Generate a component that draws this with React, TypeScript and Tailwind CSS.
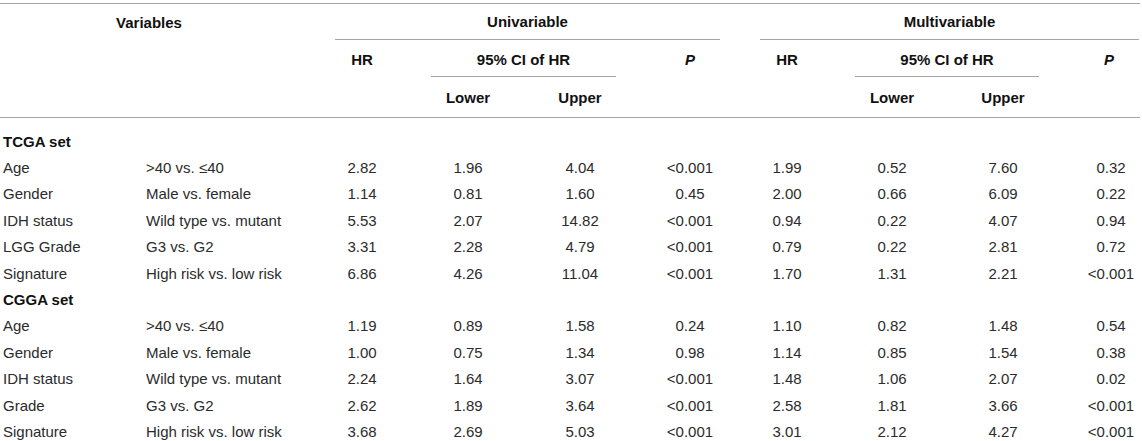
import React from "react";

type Row = [string, string, string, string, string, string, string, string, string, string];

const tcga: Row[] = [
  ["Age", ">40 vs. ≤40", "2.82", "1.96", "4.04", "<0.001", "1.99", "0.52", "7.60", "0.32"],
  ["Gender", "Male vs. female", "1.14", "0.81", "1.60", "0.45", "2.00", "0.66", "6.09", "0.22"],
  ["IDH status", "Wild type vs. mutant", "5.53", "2.07", "14.82", "<0.001", "0.94", "0.22", "4.07", "0.94"],
  ["LGG Grade", "G3 vs. G2", "3.31", "2.28", "4.79", "<0.001", "0.79", "0.22", "2.81", "0.72"],
  ["Signature", "High risk vs. low risk", "6.86", "4.26", "11.04", "<0.001", "1.70", "1.31", "2.21", "<0.001"],
];

const cgga: Row[] = [
  ["Age", ">40 vs. ≤40", "1.19", "0.89", "1.58", "0.24", "1.10", "0.82", "1.48", "0.54"],
  ["Gender", "Male vs. female", "1.00", "0.75", "1.34", "0.98", "1.14", "0.85", "1.54", "0.38"],
  ["IDH status", "Wild type vs. mutant", "2.24", "1.64", "3.07", "<0.001", "1.48", "1.06", "2.07", "0.02"],
  ["Grade", "G3 vs. G2", "2.62", "1.89", "3.64", "<0.001", "2.58", "1.81", "3.66", "<0.001"],
  ["Signature", "High risk vs. low risk", "3.68", "2.69", "5.03", "<0.001", "3.01", "2.12", "4.27", "<0.001"],
];

// column widths tuned so every centred value lands on its header
const cols = "grid grid-cols-[143px_140px_158px_54px_170px_50px_144px_66px_156px_60px]";

function SetTitle({ label }: { label: string }) {
  return (
    <div className="h-[26.4px] flex items-center pl-[3px] font-bold text-[#111]">{label}</div>
  );
}

function DataRow({ row }: { row: Row }) {
  return (
    <div className={`${cols} h-[26.4px] items-center`}>
      <div className="pl-[3px] whitespace-nowrap">{row[0]}</div>
      <div className="pl-[3px] whitespace-nowrap">{row[1]}</div>
      {row.slice(2).map((v, i) => (
        <div key={i} className="text-center whitespace-nowrap">
          {v}
        </div>
      ))}
    </div>
  );
}

export default function App() {
  return (
    <div
      className="bg-white w-[1142px] h-[441px] overflow-hidden pt-[3px] text-[15px] leading-none text-[#2b2b2b]"
      style={{ fontFamily: '"Liberation Sans", Arial, sans-serif' }}
    >
      <div className="w-[1140px] border-t border-[#a4a4a4]">
        {/* Header row 1 */}
        <div className="flex h-[36px] font-bold text-[#111]">
          <div className="w-[283px] pl-[15px] flex items-center justify-center">Variables</div>
          <div className="ml-[52px] w-[385px] flex items-center justify-center border-b border-[#a4a4a4]">
            Univariable
          </div>
          <div className="ml-[40px] w-[379px] flex items-center justify-center border-b border-[#a4a4a4]">
            Multivariable
          </div>
        </div>

        {/* Header row 2 */}
        <div className={`${cols} h-[37px] font-bold text-[#111]`}>
          <div className="col-span-2" />
          <div className="flex items-center justify-center pt-[2px]">HR</div>
          <div className="col-span-2">
            <div className="-ml-[10px] w-[185px] h-full flex items-center justify-center pt-[2px] border-b border-[#a4a4a4]">
              95% CI of HR
            </div>
          </div>
          <div className="flex items-center justify-center pt-[2px] italic">P</div>
          <div className="flex items-center justify-center pt-[2px]">HR</div>
          <div className="col-span-2">
            <div className="-ml-[4px] w-[184px] h-full flex items-center justify-center pt-[2px] border-b border-[#a4a4a4]">
              95% CI of HR
            </div>
          </div>
          <div className="flex items-center justify-center pt-[2px] pr-[4px] italic">P</div>
        </div>

        {/* Header row 3 */}
        <div className={`${cols} h-[41px] font-bold text-[#111] border-b border-[#a4a4a4]`}>
          <div className="col-span-3" />
          <div className="flex items-center justify-center">Lower</div>
          <div className="flex items-center justify-center">Upper</div>
          <div className="col-span-2" />
          <div className="flex items-center justify-center">Lower</div>
          <div className="flex items-center justify-center">Upper</div>
          <div />
        </div>

        {/* Body */}
        <div className="pt-[10px]">
          <SetTitle label="TCGA set" />
          {tcga.map((r, i) => (
            <DataRow key={"t" + i} row={r} />
          ))}
          <SetTitle label="CGGA set" />
          {cgga.map((r, i) => (
            <DataRow key={"c" + i} row={r} />
          ))}
        </div>
      </div>
    </div>
  );
}
